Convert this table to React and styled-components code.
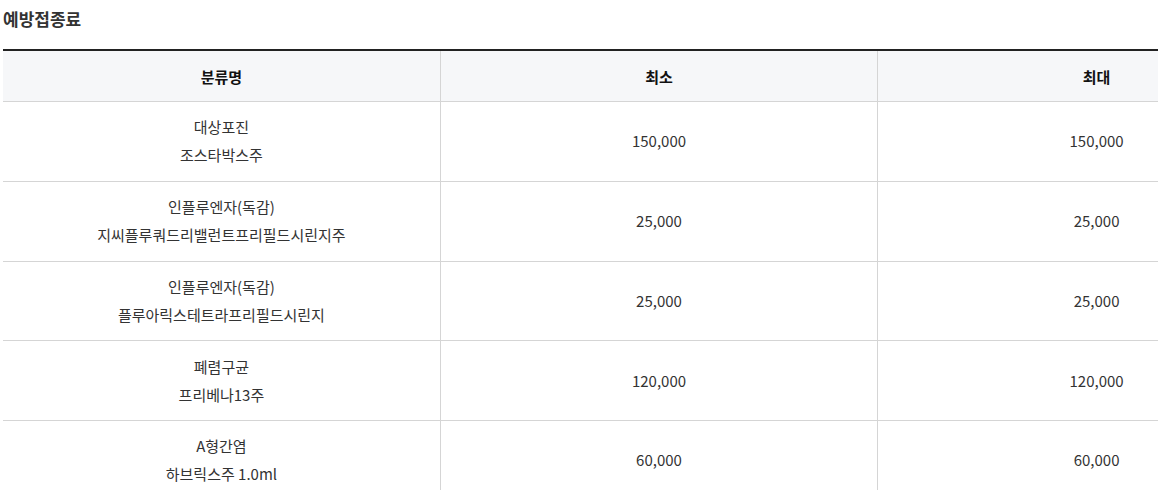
import React from "react";
import styled, { createGlobalStyle } from "styled-components";

const GlobalStyle = createGlobalStyle`
  body {
    margin: 0;
    background: #fff;
    font-family: "Noto Sans CJK KR", "Noto Sans", sans-serif;
    color: #333;
  }
`;

const Wrapper = styled.div`
  padding: 8px 0 0 3px;
  width: 1312px;
`;

const Title = styled.h3`
  margin: 0 0 19px;
  font-size: 17px;
  font-weight: 700;
  line-height: 22px;
  color: #333;
`;

const Table = styled.table`
  width: 100%;
  border-collapse: collapse;
  table-layout: fixed;
  border-top: 2px solid #222;
  font-size: 15px;
`;

const Th = styled.th`
  height: 50px;
  padding: 0;
  background: #f6f7f9;
  border-bottom: 1px solid #d5d5d5;
  border-left: ${(p) => (p.first ? "none" : "1px solid #d5d5d5")};
  font-weight: 700;
  font-size: 15px;
  color: #111;
  text-align: center;
  vertical-align: middle;
`;

const Td = styled.td`
  height: 78.75px;
  padding: 0;
  border-bottom: 1px solid #d5d5d5;
  border-left: ${(p) => (p.first ? "none" : "1px solid #d5d5d5")};
  text-align: center;
  vertical-align: middle;
  color: #333;
  line-height: 28px;
`;

const rows = [
  { kind: "대상포진", name: "조스타박스주", min: "150,000", max: "150,000" },
  { kind: "인플루엔자(독감)", name: "지씨플루쿼드리밸런트프리필드시린지주", min: "25,000", max: "25,000" },
  { kind: "인플루엔자(독감)", name: "플루아릭스테트라프리필드시린지", min: "25,000", max: "25,000" },
  { kind: "폐렴구균", name: "프리베나13주", min: "120,000", max: "120,000" },
  { kind: "A형간염", name: "하브릭스주 1.0ml", min: "60,000", max: "60,000" },
];

export default function App() {
  return (
    <Wrapper>
      <GlobalStyle />
      <Title>예방접종료</Title>
      <Table>
        <thead>
          <tr>
            <Th first>분류명</Th>
            <Th>최소</Th>
            <Th>최대</Th>
          </tr>
        </thead>
        <tbody>
          {rows.map((r, i) => (
            <tr key={i}>
              <Td first>
                {r.kind}
                <br />
                {r.name}
              </Td>
              <Td>{r.min}</Td>
              <Td>{r.max}</Td>
            </tr>
          ))}
        </tbody>
      </Table>
    </Wrapper>
  );
}
